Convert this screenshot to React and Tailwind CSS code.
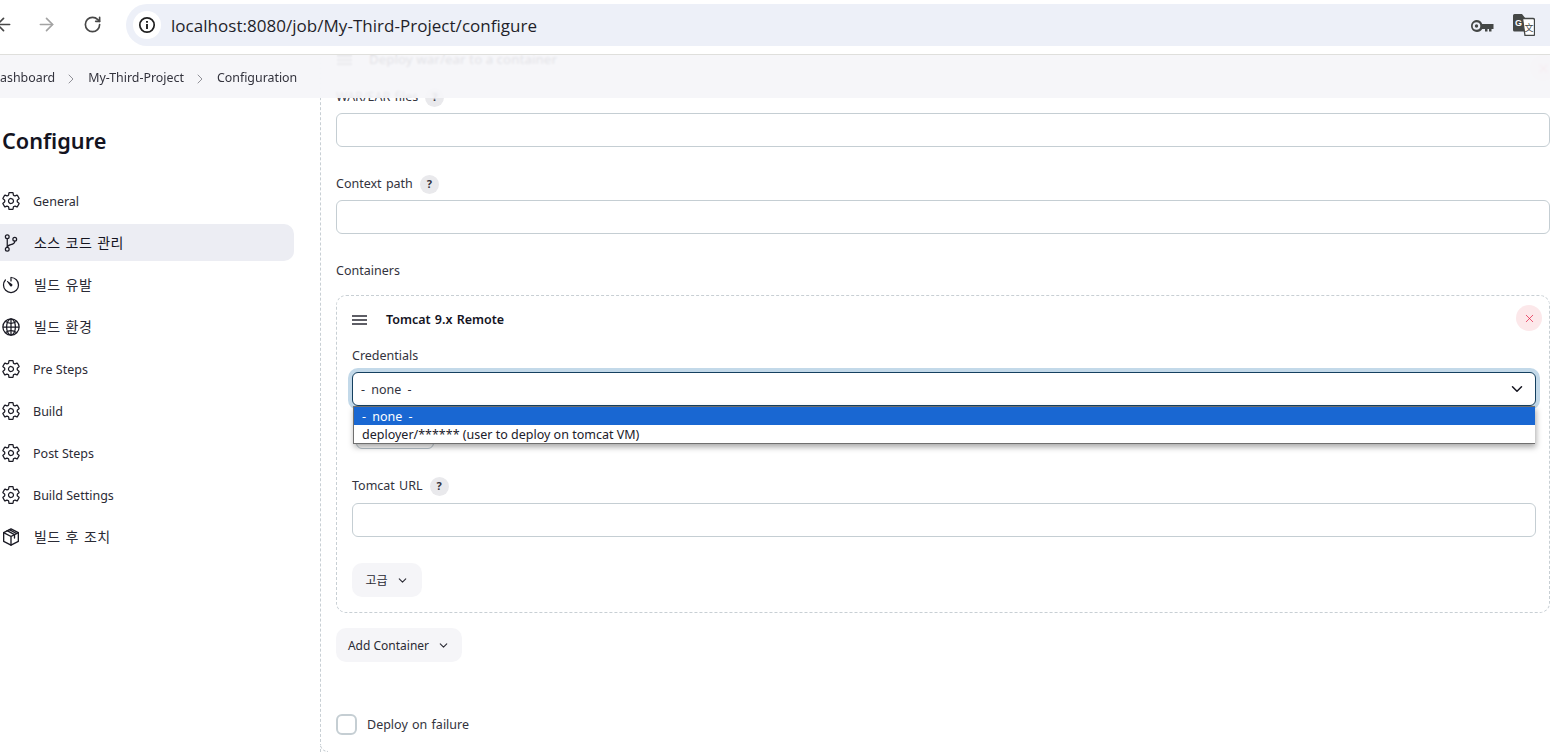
import React from "react";
import { ArrowLeft, ArrowRight, RotateCw, ChevronRight, ChevronDown, X } from "lucide-react";
import { IoSettingsOutline, IoGitBranchOutline, IoTimerOutline, IoGlobeOutline } from "react-icons/io5";

const FONT = "font-['Noto_Sans','Noto_Sans_CJK_KR',sans-serif]";
const LABEL = "flex h-[20px] items-center gap-[7px] pt-[2px] text-[12.5px] text-[#33333d] [word-spacing:1px]";

function PackageIcon({ size, className }) {
  return (
    <svg width={size} height={size} viewBox="0 0 24 24" fill="none" stroke="currentColor" strokeWidth="1.6" strokeLinejoin="round" strokeLinecap="round" className={className}>
      <path d="M12 2.200l8.800 4.500v10.600L12 21.800l-8.800-4.500V6.700z" />
      <path d="M3.200 6.700L12 11.400l8.800-4.700M12 11.400v10.400" />
      <path d="M7.300 4.400l8.900 4.800v4M10 3.200l8.600 4.600" />
    </svg>
  );
}

const NAV = [
  { label: "General", Icon: IoSettingsOutline },
  { label: "소스 코드 관리", Icon: IoGitBranchOutline, active: true, ko: true },
  { label: "빌드 유발", Icon: IoTimerOutline, ko: true },
  { label: "빌드 환경", Icon: IoGlobeOutline, ko: true },
  { label: "Pre Steps", Icon: IoSettingsOutline },
  { label: "Build", Icon: IoSettingsOutline },
  { label: "Post Steps", Icon: IoSettingsOutline },
  { label: "Build Settings", Icon: IoSettingsOutline },
  { label: "빌드 후 조치", Icon: PackageIcon, ko: true },
];

function Help() {
  return (
    <span className="flex h-[19px] w-[19px] items-center justify-center rounded-full bg-[#e9e9ec] text-[11px] font-bold text-[#33333d]">?</span>
  );
}

function Hamburger() {
  return (
    <svg width="15" height="10" viewBox="0 0 15 10" className="shrink-0" stroke="#2a2a33" strokeWidth="1.5">
      <path d="M0 1h15M0 5h15M0 9h15" />
    </svg>
  );
}

function Field() {
  return <input className="block h-[34px] w-full rounded-[6px] border border-[#c5ced3] bg-white" />;
}

function MenuButton({ children, className }) {
  return (
    <button className={`flex h-[34px] items-center rounded-[10px] bg-[#f5f5f8] pt-[1px] text-[12px] text-[#2b2b35] ${className}`}>
      {children}
      <ChevronDown size={13} strokeWidth={2} className="ml-[8px]" />
    </button>
  );
}

function Toolbar() {
  return (
    <div className="flex h-[55px] shrink-0 items-start border-b border-[#dfdfdc] bg-white">
      <div className="relative flex h-[48px] w-[126px] shrink-0 items-center">
        <ArrowLeft size={21} strokeWidth={1.9} className="ml-[-7px] text-[#474747]" />
        <ArrowRight size={21} strokeWidth={1.9} className="ml-[22px] text-[#a3a3a3]" />
        <RotateCw size={19} strokeWidth={2.1} className="ml-[26px] text-[#474747]" />
      </div>
      <div className="mt-[4px] flex h-[42px] flex-1 items-center rounded-l-full bg-[#edf0f8] pl-[7px]">
        <span className="flex h-[28px] w-[28px] items-center justify-center rounded-full bg-white">
          <svg width="18" height="18" viewBox="0 0 18 18" fill="none">
            <circle cx="9" cy="9" r="7.2" stroke="#1f1f1f" strokeWidth="1.7" />
            <path d="M9 8v5M9 5v1.7" stroke="#1f1f1f" strokeWidth="1.9" />
          </svg>
        </span>
        <span className="ml-[10px] pt-[2px] font-['Open_Sans',sans-serif] text-[17px] tracking-[0.03px] text-[#1f1f2a]">localhost:8080/job/My-Third-Project/configure</span>
        <div className="ml-auto flex items-center pr-[15px]">
          <svg width="24" height="14" viewBox="0 0 24 14" fill="#444746" className="mt-[1px]">
            <path fillRule="evenodd" d="M6.500 1a6 6 0 0 1 5.700 4H23.500v5h-2v2.500h-2.500V10h-1.500v2.500H15V10h-2.800A6 6 0 1 1 6.500 1zM6.500 3.200a3.800 3.800 0 1 0 0 7.600 3.800 3.800 0 0 0 0-7.600z" />
            <circle cx="6.500" cy="7" r="1.700" />
          </svg>
          <svg width="22" height="22" viewBox="0 0 22 22" className="ml-[19px]">
            <path d="M0 1.500A1.500 1.500 0 0 1 1.500 0h7.500L12.500 4.500v13H1.500A1.500 1.500 0 0 1 0 16z" fill="#444746" />
            <path d="M9.500 4.500h10.500A1.500 1.500 0 0 1 21.500 6v14.500a1 1 0 0 1-1 1H12z" fill="#fff" stroke="#444746" strokeWidth="1.300" />
            <text x="2" y="11.500" fontSize="9" fontWeight="700" fill="#fff" fontFamily="'Liberation Sans',sans-serif">G</text>
            <text x="11.500" y="17" fontSize="9" fill="#444746" fontFamily="'Noto Sans CJK SC',sans-serif">文</text>
          </svg>
        </div>
      </div>
    </div>
  );
}

function Breadcrumb() {
  return (
    <div className="absolute inset-x-0 top-0 z-20 flex h-[43px] items-center bg-[#f5f5f8]/92 pt-[4px] text-[12.4px] text-[#33333d] backdrop-blur-[1px]">
      <span className="-ml-[9px]">Dashboard</span>
      <ChevronRight size={16} strokeWidth={1.2} className="ml-[8px] text-[#77777f]" />
      <span className="ml-[9px]">My-Third-Project</span>
      <ChevronRight size={16} strokeWidth={1.2} className="ml-[8px] text-[#77777f]" />
      <span className="ml-[9px]">Configuration</span>
    </div>
  );
}

function Sidebar() {
  return (
    <aside className="w-[320px] shrink-0 pt-[71px]">
      <h1 className="ml-[2px] h-[30px] text-[21.7px] font-semibold leading-[30px] text-[#14141f]">Configure</h1>
      <nav className="mt-[26px] flex w-[294px] flex-col gap-[5px]">
        {NAV.map(({ label, Icon, active, ko }) => (
          <div
            key={label}
            className={`-ml-[12px] flex h-[37px] w-[306px] items-center rounded-[10px] pl-[13px] text-[#2b2b35] ${active ? "bg-[#ecedf3] text-[#14141f]" : ""}`}
          >
            <Icon size={20} strokeWidth={1.5} className="shrink-0 text-[#1a1a24]" />
            <span className={ko ? "ml-[13px] text-[14px] tracking-[0.4px] [word-spacing:1px]" : "ml-[12px] pt-[3px] text-[12.5px]"}>{label}</span>
          </div>
        ))}
      </nav>
    </aside>
  );
}

function TomcatCard() {
  return (
    <div className="mt-[15px] h-[318px] rounded-[10px] border border-dashed border-[#c8cfd4] pl-[15px] pr-[13px] pt-[13px]">
      <div className="relative flex h-[20px] items-center pt-[2px]">
        <Hamburger />
        <span className="ml-[19px] text-[12.5px] font-semibold text-[#14141f] [word-spacing:1px]">Tomcat 9.x Remote</span>
        <span className="absolute -right-[6px] top-[-4px] flex h-[26px] w-[26px] items-center justify-center rounded-full bg-[#fce8ea] text-[#e6173f]">
          <X size={13} strokeWidth={1.3} />
        </span>
      </div>
      <div className={`mt-[16px] ${LABEL}`}>Credentials</div>
      <div className="relative z-10 mt-[7px]">
        <div className="flex h-[34px] items-center justify-between rounded-[6px] border border-[#15405f] bg-white pl-[8px] pr-[9px] text-[12.5px] text-[#33333d] shadow-[0_0_0_4px_#c3d9e9]">
          <span className="pt-[3px] [word-spacing:3px]">- none -</span>
          <ChevronDown size={18} strokeWidth={2} className="text-[#14141f]" />
        </div>
        <div className="absolute left-[1px] right-[1px] top-[34px] border border-r-0 border-[#6f6f6f] bg-white text-[12.5px] leading-[18px] text-[#20202a] shadow-[1px_3px_6px_rgba(0,0,0,0.35)]">
          <div className="h-[18px] bg-[#1967d2] pl-[8px] pt-[1px] text-white [word-spacing:3px]">- none -</div>
          <div className="h-[18px] pl-[8px] pt-[1px]">deployer/****** (user to deploy on tomcat VM)</div>
        </div>
      </div>
      <div className="ml-[4px] mt-[9px] h-[34px] w-[78px] rounded-[6px] border border-[#b5c0c8] bg-white" />
      <div className={`mt-[26px] ${LABEL}`}>
        Tomcat URL <Help />
      </div>
      <div className="mt-[8px]"><Field /></div>
      <MenuButton className="mt-[26px] w-[70px] justify-center">고급</MenuButton>
    </div>
  );
}

function Content() {
  return (
    <section className="relative -mt-[8px] h-[705px] flex-1 border-l border-dashed border-[#c8cfd4] pl-[15px]">
      <div className="relative flex h-[26px] items-center pl-[1px] text-[13.2px] font-medium text-[#14141f]">
        <Hamburger />
        <span className="ml-[17px]">Deploy war/ear to a container</span>
        <span className="absolute right-[-6px] top-[8px] flex h-[26px] w-[26px] items-center justify-center rounded-full bg-[#fce8ea] text-[#e6173f]">
          <X size={13} strokeWidth={1.3} />
        </span>
      </div>
      <div className={`mt-[13px] ${LABEL}`}>WAR/EAR files <Help /></div>
      <div className="mt-[7px]"><Field /></div>
      <div className={`mt-[26px] ${LABEL}`}>Context path <Help /></div>
      <div className="mt-[7px]"><Field /></div>
      <div className={`mt-[26px] ${LABEL}`}>Containers</div>
      <TomcatCard />
      <MenuButton className="mt-[15px] w-[126px] justify-center">Add Container</MenuButton>
      <label className="mt-[52px] flex h-[21px] items-center pt-0 text-[12.5px] text-[#33333d] [word-spacing:1px]">
        <span className="h-[21px] w-[21px] rounded-[6px] border-2 border-[#c5ced3] bg-white" />
        <span className="ml-[10px] pt-[2px]">Deploy on failure</span>
      </label>
      <span className="absolute bottom-0 -left-[1px] h-[8px] w-[8px] rounded-bl-[8px] border-b border-l border-dashed border-[#c8cfd4] bg-white" />
    </section>
  );
}

export default function App() {
  return (
    <div className={`flex h-[753px] w-[1550px] flex-col overflow-hidden bg-white ${FONT}`}>
      <Toolbar />
      <main className="relative flex flex-1 overflow-hidden">
        <Breadcrumb />
        <Sidebar />
        <Content />
      </main>
    </div>
  );
}
